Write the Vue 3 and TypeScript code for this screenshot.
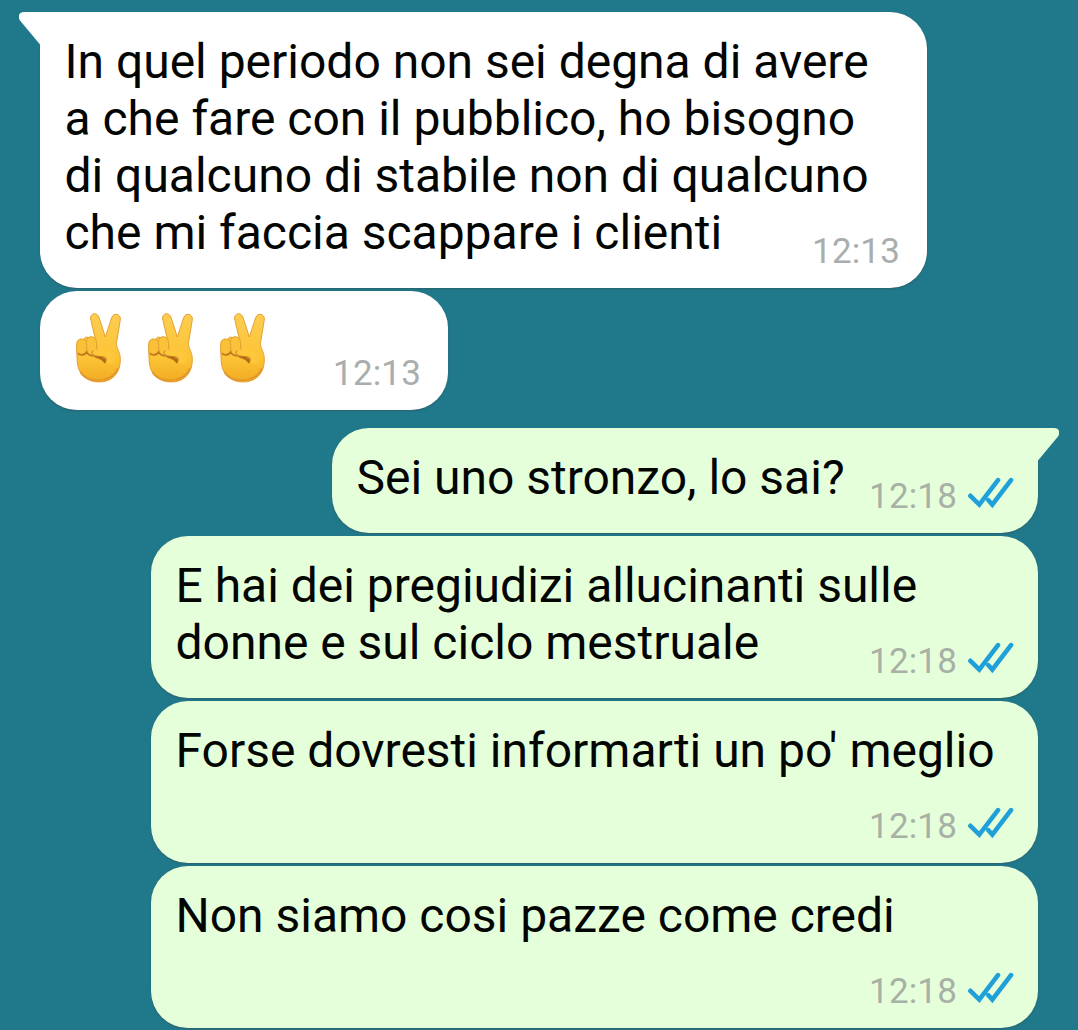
<script setup lang="ts">
interface Message {
  id: number;
  side: 'in' | 'out';
  lines?: string[];
  hands?: number;
  time: string;
  size: string;
  tail?: boolean;
}

const messages: Message[] = [
  {
    id: 1,
    side: 'in',
    lines: [
      'In quel periodo non sei degna di avere',
      'a che fare con il pubblico, ho bisogno',
      'di qualcuno di stabile non di qualcuno',
      'che mi faccia scappare i clienti',
    ],
    time: '12:13',
    size: 'four-lines',
    tail: true,
  },
  { id: 2, side: 'in', hands: 3, time: '12:13', size: 'emoji' },
  {
    id: 3,
    side: 'out',
    lines: ['Sei uno stronzo, lo sai?'],
    time: '12:18',
    size: 'short',
    tail: true,
  },
  {
    id: 4,
    side: 'out',
    lines: [
      'E hai dei pregiudizi allucinanti sulle',
      'donne e sul ciclo mestruale',
    ],
    time: '12:18',
    size: 'wide',
  },
  {
    id: 5,
    side: 'out',
    lines: ["Forse dovresti informarti un po' meglio"],
    time: '12:18',
    size: 'wide',
  },
  {
    id: 6,
    side: 'out',
    lines: ['Non siamo cosi pazze come credi'],
    time: '12:18',
    size: 'wide',
  },
];
</script>

<template>
  <main class="chat">
    <svg class="defs" width="0" height="0" aria-hidden="true">
      <defs>
        <linearGradient id="skin" x1="0" y1="0" x2="0" y2="1">
          <stop offset="0" stop-color="#fdcd51" />
          <stop offset="0.65" stop-color="#fcc335" />
          <stop offset="1" stop-color="#f2aa22" />
        </linearGradient>
        <filter id="soft" x="-20%" y="-20%" width="140%" height="140%">
          <feGaussianBlur stdDeviation="2.2" />
        </filter>
      </defs>
    </svg>

    <div
      v-for="m in messages"
      :key="m.id"
      class="bubble"
      :class="[m.side, m.size, { tailed: m.tail }]"
    >
      <svg v-if="m.tail" class="tail" viewBox="0 0 22 34">
        <path d="M22 0H5C0 0-1.8 4.5 1 8.5L21 32.5H22Z" />
      </svg>

      <p v-if="m.lines" class="text">
        <span v-for="line in m.lines" :key="line">{{ line }}</span>
      </p>
      <div v-else class="hands">
        <svg v-for="n in m.hands" :key="n" class="hand" viewBox="40 30 150 222">
          <g stroke="#e3a034" stroke-width="3" stroke-linejoin="round">
            <path
              fill="url(#skin)"
              d="M104 114L90 54C87 36 110 32 115 49L134 108L153 50C158 34 181 38 179 56L167 128C168 143 179 153 179 176C179 217 154 243 116 243C78 243 54 221 50 186L48 148L75 108Z"
            />
            <rect fill="#fac037" x="48" y="114" width="31" height="46" rx="14" />
            <path
              fill="#fcc33a"
              d="M77 123C77 102 106 102 107 122L109 150L98 163C85 165 79 158 79 148Z"
            />
          </g>
          <path
            d="M96 164C107 174 124 172 132 188C139 183 140 170 128 159Z"
            fill="#b56c17"
            filter="url(#soft)"
          />
          <path
            d="M52 158C61 165 73 162 78 153C83 163 91 165 98 163"
            fill="none"
            stroke="#bf781d"
            stroke-width="5"
            filter="url(#soft)"
          />
          <path
            fill="#fdc73b"
            d="M105 147C120 143 145 146 155 154C166 162 162 190 148 188C137 186 139 171 123 168L104 165C89 162 91 148 105 147Z"
          />
          <path
            d="M136 178C139 171 134 168 123 167L104 165C94 162 91 154 97 149"
            fill="none"
            stroke="#c07a1d"
            stroke-width="3"
            stroke-linecap="round"
          />
          <path
            d="M59 212C74 246 154 250 171 202"
            fill="none"
            stroke="#e0952a"
            stroke-width="5"
            filter="url(#soft)"
          />
        </svg>
      </div>

      <div class="meta">
        <time>{{ m.time }}</time>
        <svg v-if="m.side === 'out'" class="ticks" viewBox="0 0 46 32">
          <path d="M2.4 18.8L11.3 27.6L30 3.2M20.4 23.3L24.3 27.6L43 3.2" />
        </svg>
      </div>
    </div>
  </main>
</template>

<style>
body {
  margin: 0;
  background: #20798b;
}
</style>

<style scoped>
.chat {
  display: flex;
  flex-direction: column;
  gap: 3px;
  box-sizing: border-box;
  height: 1030px;
  padding: 12px 40px 0;
  overflow: hidden;
  background: #20798b;
  font-family: Roboto, sans-serif;
}
.defs {
  position: absolute;
}
.bubble {
  position: relative;
  display: flex;
  flex-shrink: 0;
  justify-content: space-between;
  box-sizing: border-box;
  padding: 21px 24px 0 24.5px;
  border-radius: 37px;
  box-shadow: 0 1px 2px #334f5699;
}
.in {
  align-self: flex-start;
  background: #fff;
}
.out {
  align-self: flex-end;
  background: #e6ffdb;
}
.four-lines {
  width: 887px;
  height: 276px;
}
.emoji {
  width: 408px;
  height: 119px;
  margin-bottom: 15px;
}
.short {
  width: 706px;
  height: 105px;
}
.wide {
  width: 887px;
  height: 162px;
}
.in.tailed {
  border-top-left-radius: 0;
}
.out.tailed {
  border-top-right-radius: 0;
}
.tail {
  position: absolute;
  top: 0;
  left: -21px;
  width: 22px;
  height: 34px;
  fill: #fff;
}
.out .tail {
  right: -21px;
  left: auto;
  fill: #e6ffdb;
  transform: scaleX(-1);
}
.text {
  width: 0;
  margin: 0;
  color: #030503;
  font-size: 48px;
  line-height: 57px;
  letter-spacing: -0.01px;
  white-space: nowrap;
}
.text span {
  display: block;
}
.hands {
  display: flex;
  gap: 22px;
  margin: -1px 0 0 9px;
}
.hand {
  width: 50px;
  height: 74px;
}
.meta {
  display: flex;
  align-items: flex-end;
  align-self: flex-end;
  gap: 12px;
  height: 41px;
  margin-bottom: 16px;
  color: #a9adae;
  font-size: 35px;
  line-height: 41px;
  letter-spacing: 0.15px;
}
.in .meta {
  margin-right: 3px;
}
.out .meta {
  color: #a7b1a5;
}
.ticks {
  width: 46px;
  height: 32px;
  margin: 0 0 8px -1px;
  fill: none;
  stroke: #20a0d8;
  stroke-linecap: round;
  stroke-linejoin: miter;
  stroke-width: 4.6;
}
</style>
